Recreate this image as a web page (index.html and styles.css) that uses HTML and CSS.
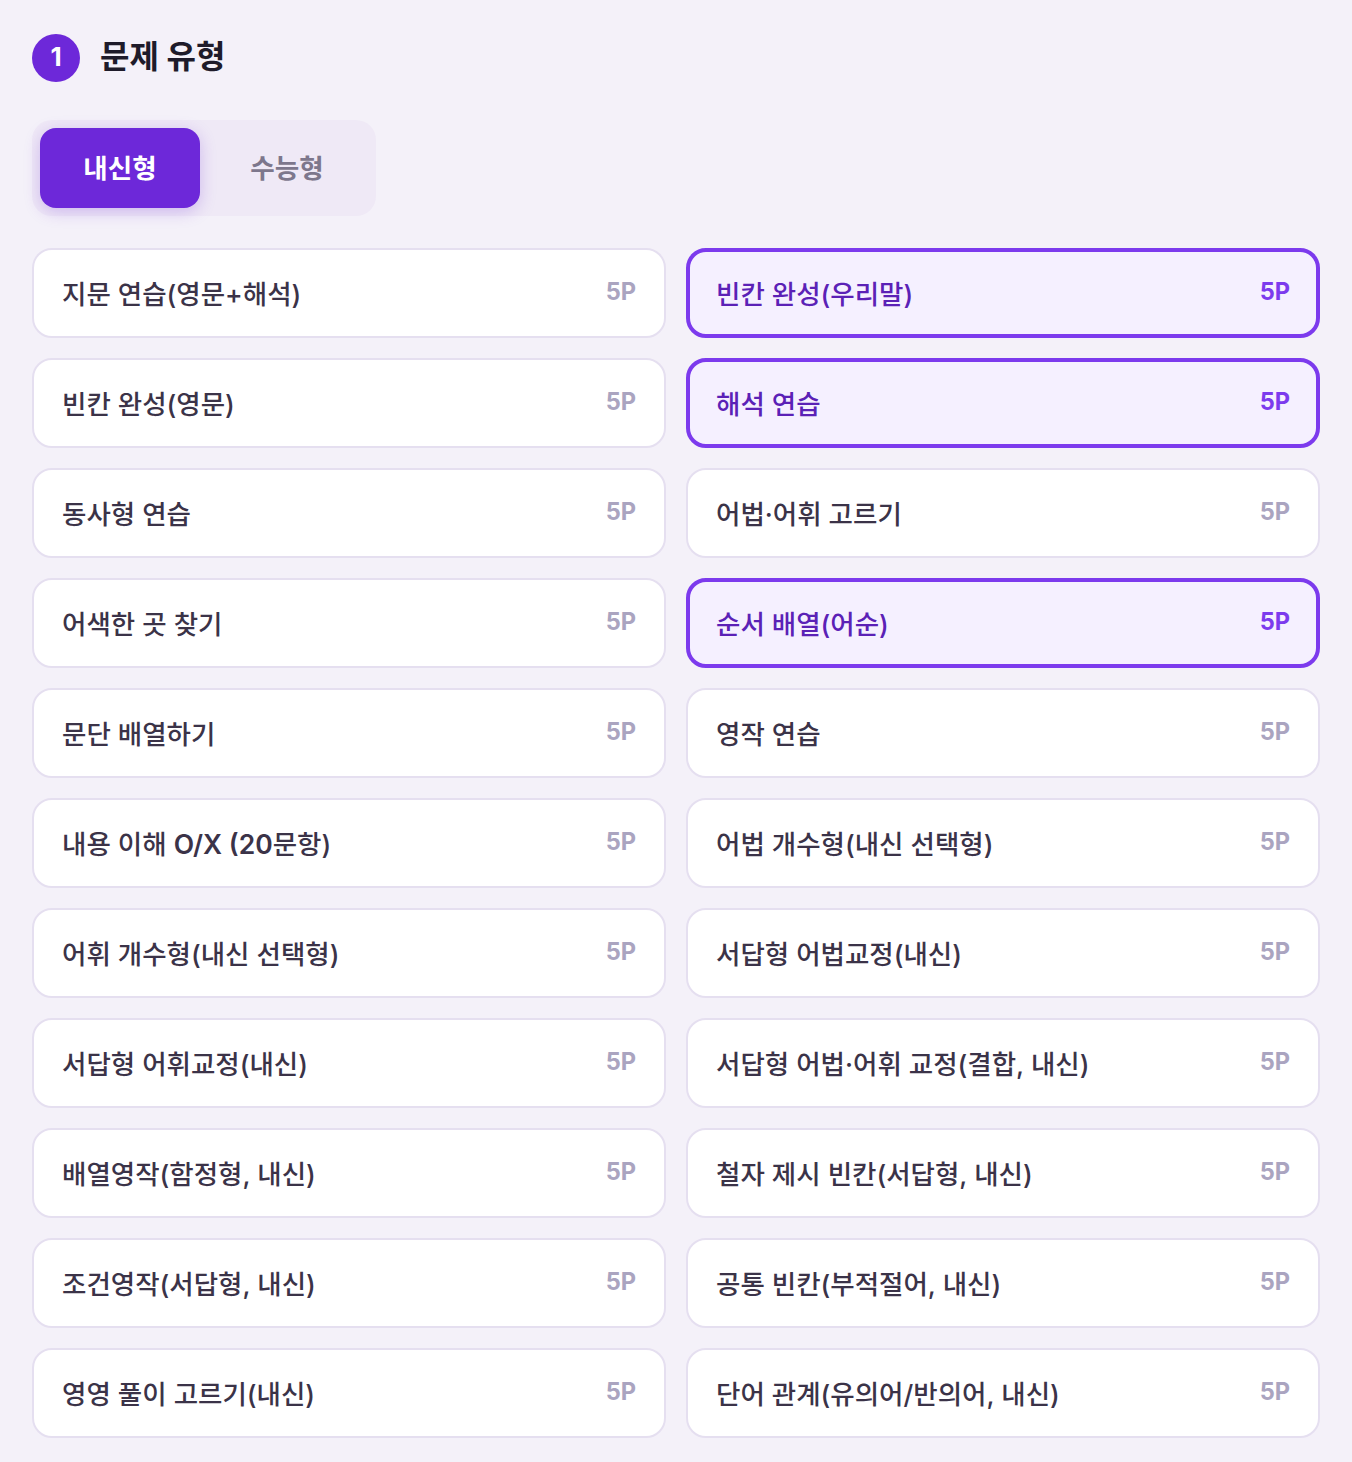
FILE: index.html
```html
<!DOCTYPE html>
<html lang="ko">
<head>
<meta charset="utf-8">
<title>문제 유형</title>
<link rel="stylesheet" href="styles.css">
</head>
<body>
<section class="panel">
  <header class="heading"><span class="step">1</span><h2>문제 유형</h2></header>
  <div class="tabs"><button class="tab active">내신형</button><button class="tab">수능형</button></div>
  <div class="grid">
    <div class="item"><span>지문 연습(영문+해석)</span><b>5P</b></div>
    <div class="item on"><span>빈칸 완성(우리말)</span><b>5P</b></div>
    <div class="item"><span>빈칸 완성(영문)</span><b>5P</b></div>
    <div class="item on"><span>해석 연습</span><b>5P</b></div>
    <div class="item"><span>동사형 연습</span><b>5P</b></div>
    <div class="item"><span>어법·어휘 고르기</span><b>5P</b></div>
    <div class="item"><span>어색한 곳 찾기</span><b>5P</b></div>
    <div class="item on"><span>순서 배열(어순)</span><b>5P</b></div>
    <div class="item"><span>문단 배열하기</span><b>5P</b></div>
    <div class="item"><span>영작 연습</span><b>5P</b></div>
    <div class="item"><span>내용 이해 <i class="latin">O/X (20</i>문항)</span><b>5P</b></div>
    <div class="item"><span>어법 개수형(내신 선택형)</span><b>5P</b></div>
    <div class="item"><span>어휘 개수형(내신 선택형)</span><b>5P</b></div>
    <div class="item"><span>서답형 어법교정(내신)</span><b>5P</b></div>
    <div class="item"><span>서답형 어휘교정(내신)</span><b>5P</b></div>
    <div class="item"><span>서답형 어법·어휘 교정(결합, 내신)</span><b>5P</b></div>
    <div class="item"><span>배열영작(함정형, 내신)</span><b>5P</b></div>
    <div class="item"><span>철자 제시 빈칸(서답형, 내신)</span><b>5P</b></div>
    <div class="item"><span>조건영작(서답형, 내신)</span><b>5P</b></div>
    <div class="item"><span>공통 빈칸(부적절어, 내신)</span><b>5P</b></div>
    <div class="item"><span>영영 풀이 고르기(내신)</span><b>5P</b></div>
    <div class="item"><span>단어 관계(유의어/반의어, 내신)</span><b>5P</b></div>
  </div>
</section>
</body>
</html>
```
FILE: styles.css
```css
* { box-sizing: border-box; }
html, body { margin: 0; }
body { background: #f4f1f9; font-family: Inter, "Noto Sans CJK KR", sans-serif; color: #3b3348; }
.panel { padding: 32px 32px 24px; }
.heading { display: flex; align-items: flex-start; gap: 20px; height: 50px; margin-bottom: 38px; }
.step { width: 48px; height: 48px; margin-top: 2px; padding-bottom: 3px; border-radius: 50%; background: #6d28d9; color: #fff; display: flex; align-items: center; justify-content: center; font-weight: 700; font-size: 26px; }
h2 { margin: 0; font-size: 32px; line-height: 49px; font-weight: 700; color: #1e1b2a; }
.tabs { display: inline-flex; gap: 6px; padding: 8px; background: #efe9f6; border-radius: 20px; margin-bottom: 32px; vertical-align: top; }
.tab { width: 160px; height: 80px; padding: 0 0 4px; border: 0; border-radius: 16px; background: transparent; color: #7d778c; font: 700 26.6px Inter, "Noto Sans CJK KR", sans-serif; }
.tab + .tab { width: 162px; }
.tab.active { background: #6d28d9; color: #fff; box-shadow: 0 4px 16px rgba(109, 40, 217, .25); }
.grid { display: grid; grid-template-columns: 1fr 1fr; gap: 20px; }
.item { height: 90px; padding: 0 28px; display: flex; justify-content: space-between; align-items: center; background: #fff; border: 2px solid #e5dff0; border-radius: 20px; font-size: 26.5px; font-weight: 500; }
.item span { margin-bottom: 1px; }
.latin { font-style: normal; font-weight: 600; }
.item b { font-size: 23.6px; font-weight: 700; color: #aaa4c0; margin-bottom: 4px; }
.on { background: #f5f0ff; padding: 0 26px; border: 4px solid #7c3aed; color: #5b21b6; }
.on b { color: #7c3aed; }
```
